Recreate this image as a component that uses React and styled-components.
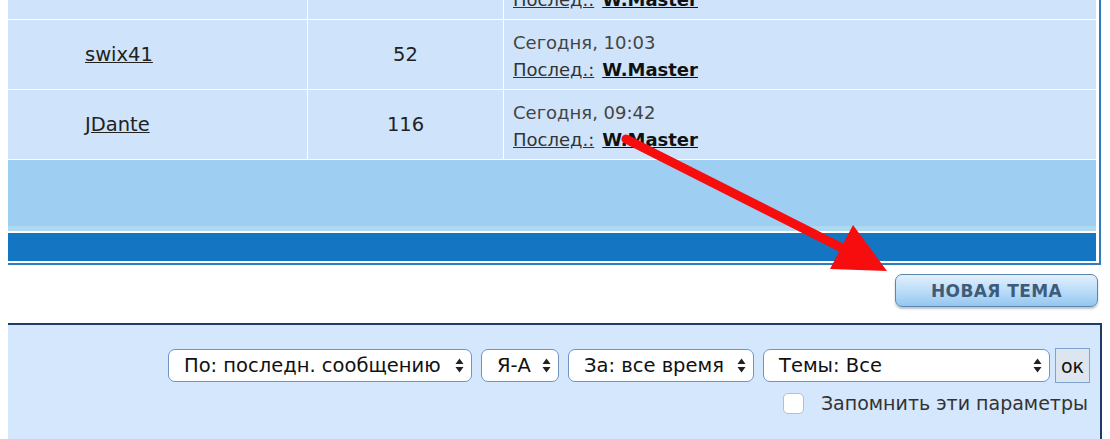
import React from 'react';
import styled, { createGlobalStyle } from 'styled-components';

const GlobalStyle = createGlobalStyle`
	body {
		margin: 0;
		background: #fff;
		font-family: 'DejaVu Sans', Verdana, sans-serif;
	}
`;

const Page = styled.div`
	position: relative;
	width: 1110px;
	height: 439px;
	overflow: hidden;
	padding-left: 8px;
	box-sizing: border-box;
`;

const ForumBox = styled.div`
	width: 1093px;
	margin-top: -50px;
	padding: 0 3px 2px 0;
	border-right: 2px solid #2f7cc1;
	border-bottom: 2px solid #2f7cc1;
	box-sizing: border-box;
	background: #fff;
	display: flex;
	flex-direction: column;
	gap: 1px;
`;

const Row = styled.div`
	display: grid;
	grid-template-columns: 299px 195px 1fr;
	gap: 1px;
	height: 69px;
`;

const Cell = styled.div`
	background: #cfe4fb;
	display: flex;
	flex-direction: column;
	justify-content: center;
	align-items: ${(p) => p.align || 'flex-start'};
	padding-left: ${(p) => p.pad || '0'};
	font-size: 19.5px;
	color: #222;
`;

const UserLink = styled.a`
	color: #222;
	text-decoration: underline;
`;

const Count = styled.span`
	color: #222;
`;

const LastDate = styled.div`
	color: #444;
	font-size: 18px;
	line-height: 27px;
	margin-top: 3px;
`;

const LastBy = styled.div`
	font-size: 18px;
	line-height: 27px;
	display: flex;
	gap: 8px;

	a {
		color: #333;
		text-decoration: underline;
	}

	a + a {
		color: #111;
		font-weight: bold;
	}
`;

const Band = styled.div`
	height: 71px;
	background: #9ecff3;
	border-bottom: 5px solid #afd8f1;
	box-sizing: border-box;
`;

const FootBar = styled.div`
	height: 28px;
	margin-top: 1px;
	background: #1475c3;
`;

const ButtonBar = styled.div`
	width: 1093px;
	display: flex;
	justify-content: flex-end;
	padding: 9px 3px 0 0;
	box-sizing: border-box;
`;

const NewTopic = styled.button`
	width: 203px;
	height: 33px;
	border: 1.5px solid #5c86ad;
	border-radius: 7px;
	background: linear-gradient(#e2f0fd, #b8dbf8 55%, #95c6ef);
	box-shadow: 0 2px 2px rgba(60, 90, 120, 0.35);
	color: #3f5b78;
	font-family: 'DejaVu Sans', Verdana, sans-serif;
	font-weight: bold;
	font-size: 17px;
	letter-spacing: 0.4px;
	cursor: pointer;
`;

const Panel = styled.div`
	width: 1094px;
	margin-top: 16px;
	height: 120px;
	background: #d4e7fc;
	border-top: 2px solid #1c3c69;
	border-right: 2px solid #1c3c69;
	box-sizing: border-box;
	padding: 23px 10px 0 0;
	display: flex;
	flex-direction: column;
	align-items: flex-end;
	gap: 9px;
`;

const Filters = styled.div`
	display: flex;
	align-items: center;
	gap: 9px;
`;

const SelectBox = styled.div`
	width: ${(p) => p.w}px;
	height: 33px;
	box-sizing: border-box;
	background: #fff;
	border: 1.5px solid #7193c3;
	border-radius: 7px;
	display: flex;
	align-items: center;
	justify-content: space-between;
	padding: 0 7px 0 15px;
	font-size: 19.5px;
	color: #111;
	white-space: nowrap;
`;

const OkButton = styled.button`
	width: 35px;
	height: 35px;
	margin-left: -4px;
	border: 1.5px solid #7ea3cc;
	background: #dde5ee;
	font-family: 'DejaVu Sans', Verdana, sans-serif;
	font-size: 19px;
	color: #111;
	padding: 0;
`;

const Remember = styled.label`
	display: flex;
	align-items: center;
	gap: 17px;
	font-size: 19px;
	color: #333;
	margin-right: 2px;
`;

const Check = styled.span`
	width: 21px;
	height: 21px;
	box-sizing: border-box;
	border: 1px solid #b9bec4;
	border-radius: 5px;
	background: #fff;
`;

const ArrowLayer = styled.svg`
	position: absolute;
	left: 0;
	top: 0;
	pointer-events: none;
`;

const Updown = () => (
	<svg width='9' height='15' viewBox='0 0 9 15'>
		<path d='M4.5 0.5 L8.5 6 H0.5 Z M4.5 14.5 L8.5 9 H0.5 Z' fill='#222' />
	</svg>
);

const rows = [
	{ user: '', posts: '', date: 'Сегодня, 10:21' },
	{ user: 'swix41', posts: '52', date: 'Сегодня, 10:03' },
	{ user: 'JDante', posts: '116', date: 'Сегодня, 09:42' },
];

const filters = [
	{ label: 'По: последн. сообщению', w: 304 },
	{ label: 'Я-А', w: 78 },
	{ label: 'За: все время', w: 186 },
	{ label: 'Темы: Все', w: 287 },
];

export default function App() {
	return (
		<>
			<GlobalStyle />
			<Page>
				<ForumBox>
					{rows.map((r) => (
						<Row key={r.date}>
							<Cell pad='77px'>
								<UserLink href='#'>{r.user}</UserLink>
							</Cell>
							<Cell align='center'>
								<Count>{r.posts}</Count>
							</Cell>
							<Cell pad='9px'>
								<LastDate>{r.date}</LastDate>
								<LastBy>
									<a href='#'>Послед.:</a>
									<a href='#'>W.Master</a>
								</LastBy>
							</Cell>
						</Row>
					))}
					<Band />
					<FootBar />
				</ForumBox>

				<ButtonBar>
					<NewTopic>НОВАЯ ТЕМА</NewTopic>
				</ButtonBar>

				<Panel>
					<Filters>
						{filters.map((f) => (
							<SelectBox key={f.label} w={f.w}>
								<span>{f.label}</span>
								<Updown />
							</SelectBox>
						))}
						<OkButton>ок</OkButton>
					</Filters>
					<Remember>
						<Check />
						Запомнить эти параметры
					</Remember>
				</Panel>

				<ArrowLayer width='1110' height='439'>
					<line x1='626' y1='139' x2='848' y2='251' stroke='#f70d0d' strokeWidth='9' strokeLinecap='round' />
					<polygon points='887,271 853,225 830,269' fill='#f70d0d' />
				</ArrowLayer>
			</Page>
		</>
	);
}
